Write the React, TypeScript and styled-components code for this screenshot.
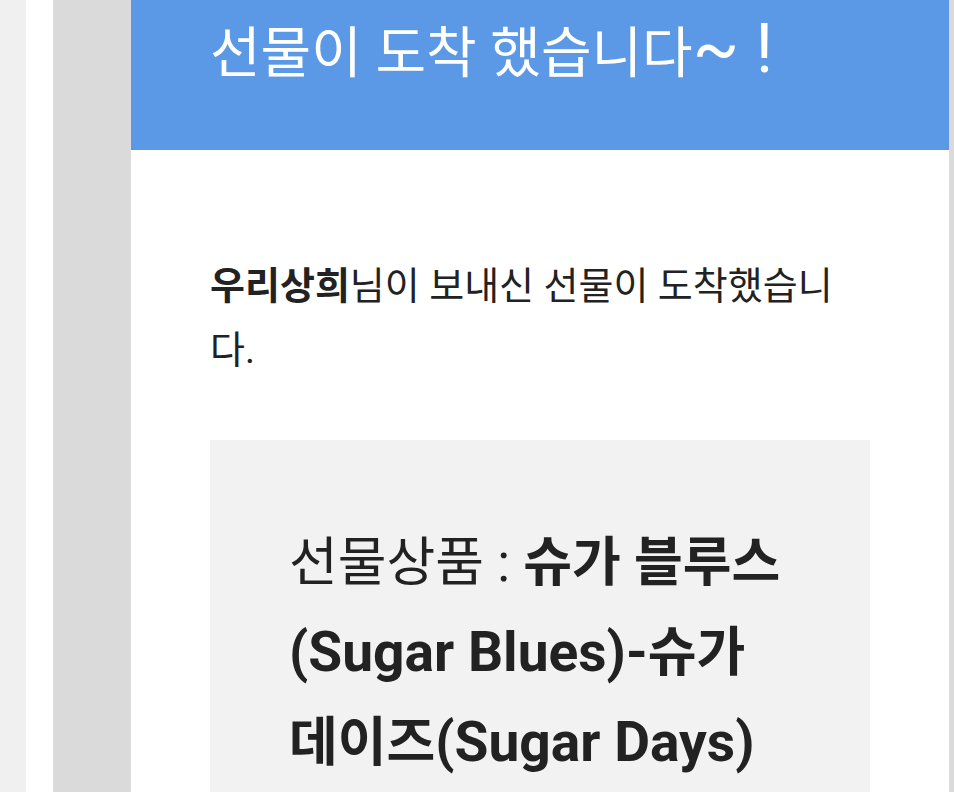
import React from "react";
import styled, { createGlobalStyle } from "styled-components";

const GlobalStyle = createGlobalStyle`
  html, body {
    margin: 0;
    padding: 0;
    background: #f0f0f0;
    overflow: hidden;
  }
  body {
    font-family: Roboto, "Noto Sans CJK KR", sans-serif;
    -webkit-font-smoothing: antialiased;
  }
  * {
    box-sizing: border-box;
  }
`;

/* Outer page: light gray gutter, then a white rail, then the gray mail backdrop */
const Page = styled.div`
  display: flex;
  min-height: 100vh;
  padding-left: 26px;
`;

const Rail = styled.div`
  flex: 1;
  display: flex;
  background: #ffffff;
  padding-left: 27px;
`;

const Backdrop = styled.div`
  flex: 1;
  display: flex;
  background: #dadada;
  padding-left: 78px;
`;

const Card = styled.article`
  flex: none;
  width: 818px;
  background: #ffffff;
`;

const Header = styled.header`
  height: 150px;
  padding: 15px 79px 0;
  background: #5b98e5;
`;

const Title = styled.h1`
  margin: 0;
  font-size: 55px;
  line-height: 60px;
  font-weight: 400;
  color: #ffffff;
  white-space: nowrap;
`;

const Body = styled.div`
  padding: 104px 79px 0;
`;

const Message = styled.p`
  margin: 0;
  max-width: 640px;
  font-size: 38px;
  line-height: 64px;
  color: #222222;
`;

const Sender = styled.strong`
  font-weight: 700;
`;

const GiftBox = styled.section`
  margin-top: 58px;
  padding: 78px 84px 80px 79px;
  background: #f2f2f2;
`;

const GiftLine = styled.p`
  margin: 0;
  font-size: 53px;
  line-height: 90px;
  color: #222222;
`;

const Product = styled.strong`
  font-weight: 700;
`;

/* Latin runs are set a step larger so they sit with the Hangul around them */
const Latin = styled.span<{ $scale?: number; $track?: number }>`
  font-size: ${({ $scale = 1.04 }) => $scale}em;
  letter-spacing: ${({ $track = 0 }) => $track}em;
  line-height: 1;
`;

export default function App() {
  return (
    <>
      <GlobalStyle />
      <Page>
        <Rail>
          <Backdrop>
            <Card>
              <Header>
                <Title>
                  선물이 도착 했습니다
                  <Latin $scale={1.24} $track={0.24}>
                    ~!
                  </Latin>
                </Title>
              </Header>
              <Body>
                <Message>
                  <Sender>우리상희</Sender>님이 보내신 선물이 도착했습니다.
                </Message>
                <GiftBox>
                  <GiftLine>
                    선물상품 :{" "}
                    <Product>
                      슈가 블루스 <Latin>(Sugar Blues)-</Latin>슈가 데이즈
                      <Latin>(Sugar Days)</Latin>
                    </Product>
                  </GiftLine>
                </GiftBox>
              </Body>
            </Card>
          </Backdrop>
        </Rail>
      </Page>
    </>
  );
}
